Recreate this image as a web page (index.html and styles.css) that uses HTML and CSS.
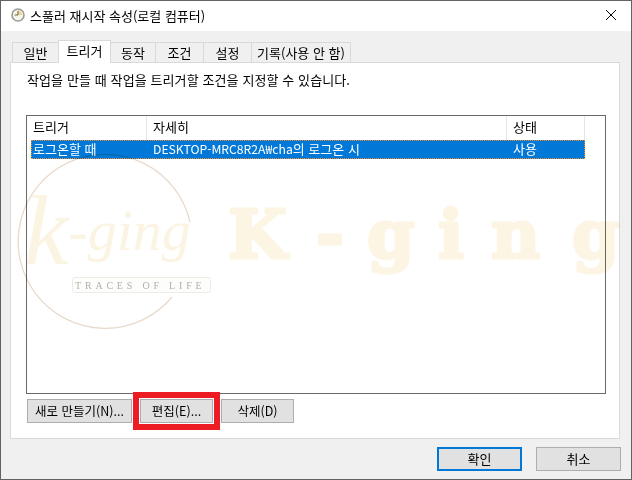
FILE: index.html
```html
<!DOCTYPE html>
<html lang="ko">
<head>
  <meta charset="UTF-8" />
  <title>스풀러 재시작 속성</title>
  <link rel="stylesheet" href="styles.css">
</head>
<body>
  <div class="window">
    <div class="titlebar">
      <svg class="clock" width="14" height="14" viewBox="0 0 14 14">
        <circle cx="7" cy="7" r="6" fill="#f7f5e8" stroke="#9b9b9b" stroke-width="1.6"/>
        <path d="M7 7V2.8A4.2 4.2 0 0 1 11.2 7Z" fill="#efd794"/>
        <path d="M7 2.8V7H3.6" fill="none" stroke="#6b6350" stroke-width="1"/>
      </svg>
      <span class="title">스풀러 재시작 속성(로컬 컴퓨터)</span>
      <svg class="close" width="10" height="10" viewBox="0 0 10 10">
        <path d="M0 0L10 10M10 0L0 10" stroke="#000" stroke-width="1"/>
      </svg>
    </div>

    <div class="tabs">
      <div class="tab t1">일반</div>
      <div class="tab t2 active">트리거</div>
      <div class="tab t3">동작</div>
      <div class="tab t4">조건</div>
      <div class="tab t5">설정</div>
      <div class="tab t6">기록(사용 안 함)</div>
    </div>

    <div class="panel">
      <p class="desc">작업을 만들 때 작업을 트리거할 조건을 지정할 수 있습니다.</p>
      <div class="list">
        <div class="list-head">
          <div class="col c1">트리거</div>
          <div class="col c2">자세히</div>
          <div class="col c3">상태</div>
        </div>
        <div class="list-row">
          <div class="cell c1">로그온할 때</div>
          <div class="cell c2"><span class="latin">DESKTOP-MRC8R2A₩cha</span>의 로그온 시</div>
          <div class="cell c3">사용</div>
        </div>
      </div>
      <div class="actions">
        <button class="button new">새로 만들기(N)...</button>
        <button class="button edit">편집(E)...</button>
        <button class="button del">삭제(D)</button>
      </div>
    </div>

    <div class="footer">
      <button class="button ok">확인</button>
      <button class="button cancel">취소</button>
    </div>

    <svg class="logo" width="632" height="480" viewBox="0 0 632 480">
      <path d="M190 222A87 87 0 1 0 172 297" fill="none" stroke="#e8dacd" stroke-width="1.3"/>
      <text class="script" x="24" y="264"><tspan font-size="100">k</tspan><tspan font-size="58" dy="-14">-ging</tspan></text>
      <rect x="72.5" y="277.5" width="138" height="15" rx="2" fill="#fdfdfc" stroke="#f0ebe6"/>
      <text class="traces" x="75" y="289">TRACES OF LIFE</text>
      <text class="brand" x="228" y="258" font-size="68">K</text>
      <text class="brand" x="316" y="258" font-size="68">-</text>
      <text class="brand" x="367" y="258" font-size="68">g</text>
      <text class="brand" x="438" y="258" font-size="68">i</text>
      <text class="brand" x="491" y="258" font-size="68">n</text>
      <text class="brand" x="572" y="258" font-size="68">g</text>
    </svg>
  </div>
</body>
</html>
```

FILE: styles.css
```css
html, body {
  margin: 0;
  padding: 0;
}
body {
  width: 632px;
  height: 480px;
  overflow: hidden;
  font-family: "Noto Sans CJK KR", "Noto Sans", sans-serif;
  font-size: 13px;
  color: #000;
}
.window {
  position: relative;
  box-sizing: border-box;
  width: 632px;
  height: 480px;
  background: #f0f0f0;
  border: 1px solid #606468;
  display: flex;
  flex-direction: column;
  overflow: hidden;
}
.titlebar {
  height: 30px;
  flex: none;
  background: #fff;
  display: flex;
  align-items: center;
  padding: 0 15px 2px 10px;
  box-sizing: border-box;
}
.title {
  margin-left: 5px;
  flex: 1;
}
.tabs {
  height: 31px;
  flex: none;
  display: flex;
  align-items: flex-end;
  padding-left: 11px;
  position: relative;
  z-index: 1;
}
.tab {
  box-sizing: border-box;
  height: 20px;
  margin-left: -1px;
  background: #f0f0f0;
  border: 1px solid #d9d9d9;
  border-bottom: none;
  text-align: center;
  line-height: 19px;
}
.t1 { width: 47px; margin-left: 0; }
.t2 { width: 53px; height: 23px; background: #fff; margin-bottom: -1px; line-height: 19px; }
.t3 { width: 46px; }
.t4 { width: 49px; }
.t5 { width: 49px; }
.t6 { width: 100px; }
.panel {
  box-sizing: border-box;
  width: 610px;
  height: 377px;
  margin-left: 9px;
  background: #fff;
  border: 1px solid #d9d9d9;
  padding: 0 12px 0 15px;
  display: flex;
  flex-direction: column;
}
.desc {
  margin: 8px 0 0 1px;
  line-height: 18px;
  height: 18px;
  letter-spacing: 0.1px;
}
.list {
  box-sizing: border-box;
  width: 580px;
  height: 279px;
  margin-top: 26px;
  border: 1px solid #6a6a6a;
}
.list-head {
  height: 24px;
  display: flex;
  line-height: 21px;
}
.col {
  box-sizing: border-box;
  border-right: 1px solid #e5e5e5;
  padding-left: 6px;
}
.col.c1 { width: 120px; }
.col.c2 { width: 360px; }
.col.c3 { width: 78px; }
.list-row {
  box-sizing: border-box;
  width: 554px;
  height: 19px;
  margin-left: 4px;
  background: #0078d7;
  color: #fff;
  outline: 1px dotted #f28c28;
  outline-offset: -1px;
  display: flex;
  line-height: 17px;
}
.cell { box-sizing: border-box; padding-left: 2px; }
.cell.c1 { width: 116px; }
.cell.c2 { width: 360px; padding-left: 6px; }
.cell.c3 { padding-left: 6px; }
.latin { font-size: 12.2px; }
.actions {
  display: flex;
  margin-top: 5px;
  margin-left: 1px;
}
.button {
  box-sizing: border-box;
  height: 24px;
  padding: 0;
  background: #e1e1e1;
  border: 1px solid #adadad;
  font: inherit;
  font-size: 12.5px;
  color: #000;
  line-height: 20px;
}
.new { width: 105px; }
.edit {
  width: 73px;
  margin-left: 8px;
  box-shadow: 0 0 0 1px #fff;
  outline: 6px solid #ed1c24;
  outline-offset: 1px;
}
.del { width: 73px; margin-left: 8px; }
.footer {
  flex: 1;
  display: flex;
  justify-content: flex-end;
  align-items: flex-start;
  gap: 14px;
  padding: 8px 10px 0 0;
}
.ok, .cancel {
  width: 85px;
  font-size: 13px;
}
.ok {
  border: 2px solid #0078d7;
}
.logo {
  position: absolute;
  left: -1px;
  top: -1px;
  pointer-events: none;
  mix-blend-mode: multiply;
}
.script {
  font-family: "Liberation Serif", serif;
  font-style: italic;
  fill: #fbf4e2;
}
.traces {
  font-family: "Liberation Serif", serif;
  font-size: 10px;
  letter-spacing: 3.8px;
  fill: #b4b0aa;
}
.brand {
  font-family: "DejaVu Serif", serif;
  font-weight: 700;
  fill: #fdf5e3;
  stroke: #fdf5e3;
  stroke-width: 3;
  stroke-linejoin: round;
}
```
